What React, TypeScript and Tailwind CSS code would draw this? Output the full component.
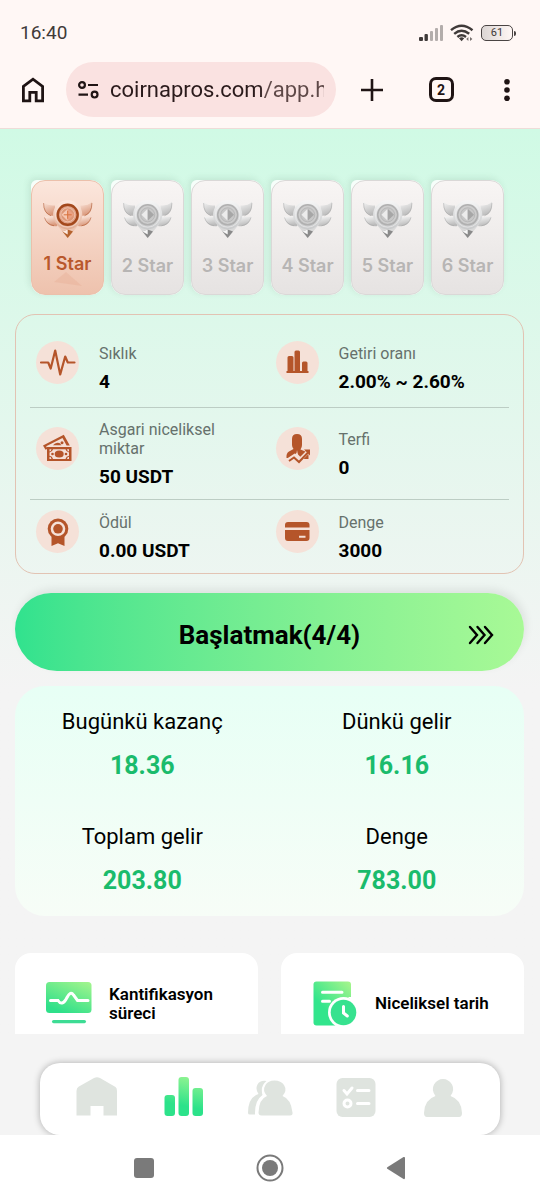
import React, { useState } from 'react';

const LEVELS = [1, 2, 3, 4, 5, 6];

const EARNINGS = [
  { label: 'Bugünkü kazanç', value: '18.36' },
  { label: 'Dünkü gelir', value: '16.16' },
  { label: 'Toplam gelir', value: '203.80' },
  { label: 'Denge', value: '783.00' },
];

const StatusBar = () => (
  <div className="flex h-[62px] items-center justify-between pt-1 pr-6 pl-5">
    <span className="text-[19px] leading-6 text-[#3f3a39]">16:40</span>
    <div className="flex items-center gap-[7px]">
      <svg width="24" height="16" viewBox="0 0 24 16" aria-hidden="true">
        <rect x="0" y="12" width="4" height="4" rx="1" fill="#3f3a39" />
        <rect x="5.5" y="9" width="3.4" height="7" rx="1" fill="#3f3a39" />
        <rect x="11" y="6" width="3" height="10" rx="1" fill="#b3adab" />
        <rect x="16" y="3" width="3" height="13" rx="1" fill="#b3adab" />
        <rect x="21" y="0" width="3" height="16" rx="1" fill="#b3adab" />
      </svg>
      <svg width="24" height="18" viewBox="0 0 24 18" fill="none" stroke="#3f3a39" strokeWidth="2.4" aria-hidden="true">
        <path d="M1 6.2Q11.5-2.8 22.5 6.2" />
        <path d="M4.2 9.8Q11.5 3.6 19.2 9.8" />
        <path d="M7.4 13Q11.5 9.4 16 13" />
        <path d="M9 14.2Q11.6 12.4 14.2 14.2L11.6 17.2z" fill="#3f3a39" stroke="none" />
        <path d="M18.4 13v4l-2.2-2zM20 17v-4l2.4 2z" fill="#77706e" stroke="none" />
      </svg>
      <div className="flex items-center gap-px">
        <div className="flex h-4 w-8 items-center justify-center rounded-[5px] border border-[#4a4443] bg-linear-to-r from-[#dcd6d4] to-[#fff7f5] text-[11px] leading-[14px] text-[#3f3a39]">
          61
        </div>
        <div className="h-[5px] w-[2px] rounded-r-sm bg-[#4a4443]" />
      </div>
    </div>
  </div>
);

const BrowserBar = () => {
  const [url, setUrl] = useState('coirnapros.com/app.h');

  return (
    <div className="flex items-center pb-[11px] text-[#1f1414]">
      <button type="button" aria-label="Home" className="flex w-[66px] justify-center">
        <svg width="24" height="26" viewBox="0 0 24 26" fill="none" stroke="currentColor" strokeWidth="2.8">
          <path d="M2.4 9.4 12 2.2l9.6 7.2v14.4h-6.4v-8.4H8.8v8.4H2.4z" />
        </svg>
      </button>
      <div className="flex h-[55px] min-w-0 flex-1 items-center gap-[11px] rounded-full bg-[#fae2e1] px-3">
        <svg className="shrink-0" width="21" height="18" viewBox="0 0 21 18" fill="none" stroke="currentColor" strokeWidth="2.2">
          <circle cx="4" cy="4" r="2.9" />
          <path d="M10 4h10M0.5 13.6h9.5" />
          <circle cx="16.6" cy="13.6" r="2.9" />
        </svg>
        <input
          aria-label="Address"
          value={url}
          onChange={(e) => setUrl(e.target.value)}
          className="w-full min-w-0 bg-linear-to-r from-[#2a1a1b] from-70% to-[#5e4847] to-72% bg-clip-text text-[22px] leading-7 text-transparent caret-black outline-none"
        />
      </div>
      <button type="button" aria-label="New tab" className="flex w-[72px] justify-center">
        <svg width="22" height="22" viewBox="0 0 22 22" stroke="currentColor" strokeWidth="2.6">
          <path d="M11 0v22M0 11h22" />
        </svg>
      </button>
      <div className="flex w-[66px] justify-center">
        <button
          type="button"
          aria-label="Tabs"
          className="flex size-[25px] items-center justify-center rounded-[7px] border-3 border-[#1f1414] text-sm leading-4 font-bold"
        >
          2
        </button>
      </div>
      <button type="button" aria-label="Menu" className="flex w-[66px] justify-center">
        <svg width="6" height="22" viewBox="0 0 6 22" fill="currentColor">
          <circle cx="3" cy="2.8" r="2.8" />
          <circle cx="3" cy="11" r="2.8" />
          <circle cx="3" cy="19.2" r="2.8" />
        </svg>
      </button>
    </div>
  );
};

const Badge = ({ id, active }: { id: string; active: boolean }) => {
  const light = active ? '#fdeae1' : '#f6f6f6';
  const mid = active ? '#d9977a' : '#bababa';
  const dark = active ? '#a3481c' : '#a3a3a3';
  const deep = active ? '#b5632f' : '#8a8a8a';

  return (
    <svg width="50" height="38" viewBox="0 0 50 38" aria-hidden="true">
      <defs>
        <linearGradient id={`${id}-wing`} x1="0" y1="0" x2="0.3" y2="1">
          <stop offset="0" stopColor={light} />
          <stop offset="1" stopColor={mid} />
        </linearGradient>
        <linearGradient id={`${id}-disc`} x1="0" y1="0" x2="0" y2="1">
          <stop offset="0" stopColor={light} />
          <stop offset="0.5" stopColor={active ? '#f1cdbc' : '#dedfe0'} />
          <stop offset="1" stopColor={active ? '#e0ab92' : '#c8c9ca'} />
        </linearGradient>
      </defs>
      {/* wings, two feathers a side */}
      <g fill={`url(#${id}-wing)`}>
        <path d="M0.5 1.5C3 4.500 6 5.500 12 5.500V15.800C4 16.500-0.500 11 0.500 1.500z" />
        <path d="M1.200 16.800H12L14.500 26C7 27 2.500 23.500 1.200 16.800z" />
        <path d="M49 1.500C46.500 4.500 43.500 5.500 37.500 5.500V15.800C45.500 16.500 50 11 49 1.500z" />
        <path d="M48.300 16.800H37.500L35 26C42.500 27 47 23.500 48.300 16.800z" />
      </g>
      <path
        d="M0.600 3Q0.500 13 8 15.800M1.500 17.500Q3.500 24.500 11 25.800M48.900 3Q49 13 41.500 15.800M48 17.500Q46 24.500 38.500 25.800"
        stroke={dark}
        strokeOpacity="0.55"
        strokeWidth="0.9"
        fill="none"
      />
      <path d="M14 25 24.700 38 35.500 25z" fill={active ? '#edc4b0' : '#d9d9d9'} />
      <path d="M19.500 31.600 24.700 38 30 31.600 24.700 29.500z" fill={deep} />
      <path d="M19.500 31.600 24.700 29.500V34.500z" fill={light} />
      <circle cx="24.700" cy="14.800" r="14.600" fill={`url(#${id}-disc)`} />
      <circle cx="24.700" cy="14.800" r="12.400" fill="none" stroke={light} strokeOpacity="0.5" />
      <circle cx="24.700" cy="14.800" r="10" fill={active ? '#e0a288' : '#cdcdcd'} stroke={active ? dark : '#b0b0b0'} strokeWidth={active ? 2.4 : 1.6} />
      <circle cx="24.700" cy="14.800" r="7" fill={active ? '#dd9878' : '#c8c8c8'} stroke={active ? '#efc0aa' : '#b8b8b8'} />
      <path d="M24.700 8.800 18.500 14.800l6.200 6z" fill={active ? '#f6c9b4' : '#ececec'} />
      <path d="M24.700 8.800 31 14.800l-6.300 6z" fill={active ? '#eba184' : '#a6a6a6'} />
      {active && <path d="M24.700 10.800v8M20.700 14.800h8" stroke="#d9743f" />}
    </svg>
  );
};

const LevelCard = ({ level, active, onSelect }: { level: number; active: boolean; onSelect: () => void }) => (
  <button
    type="button"
    onClick={onSelect}
    aria-pressed={active}
    className="h-[115px] flex-1 rounded-[14px] rounded-tl-md bg-white/80 shadow-[-2px_-2px_6px_rgba(80,120,100,0.14)]"
  >
    <div
      className={`relative flex h-full flex-col items-center rounded-[14px] border pt-[19px] ${
        active
          ? 'gap-4 border-[#ebc0ab] bg-linear-to-b from-[#fbe6dc] to-[#eec2ad] text-[#b9582c]'
          : 'gap-[18px] border-[#dad8d7] bg-linear-to-b from-[#f8f5f4] to-[#e6e3e2] text-[#b7b5b4]'
      }`}
    >
      {active && (
        <svg className="absolute bottom-2 left-[22px]" width="28" height="14" viewBox="0 0 28 14" aria-hidden="true">
          <path d="M12 0 28 14 0 10z" fill="#e3a78c" fillOpacity="0.3" />
        </svg>
      )}
      <Badge id={`badge-${level}`} active={active} />
      <span className="relative font-[Inter] text-lg leading-5 font-semibold whitespace-nowrap">{level} Star</span>
    </div>
  </button>
);

const PulseIcon = () => (
  <svg width="43" height="43" viewBox="0 0 43 43" fill="none" stroke="#b5552a" strokeWidth="2.2" strokeLinecap="round" strokeLinejoin="round">
    <path d="M5 21.500h7.200l2.500 6 4.500-18 5 24 5-18 2.600 6H38.500" />
  </svg>
);

const BarsIcon = () => (
  <svg width="43" height="43" viewBox="0 0 43 43" fill="#b5552a">
    <path d="M11.500 30V16.500q0-1.500 1.500-1.500h3q1.500 0 1.500 1.500V30h1V11q0-1.500 1.500-1.500h2.500q1.500 0 1.500 1.500V30h2v-8q0-1.500 1.500-1.500h2.500q1.500 0 1.500 1.500v8h1v2h-22v-2z" />
  </svg>
);

const CashIcon = () => (
  <svg width="43" height="43" viewBox="0 0 43 43" fill="#b5552a">
    <path d="M7 18.500 27.800 7.800l6 10.700h-3.200L26.500 11 10.200 19.300l1.300 2.500-2 1z" />
    <path d="M17 18.200q2.500-3.500 6.500-2.200l2 2.200z" />
    <circle cx="26" cy="15.800" r="1.500" />
    <path fillRule="evenodd" d="M11 20h24.500v14H11zM13.500 22.300v2.200q1.500 0 2-2.200zM31 22.300q.5 2.200 2 2.200v-2.200zM13.500 29.700v2.200h2q-.5-2.200-2-2.200zM31 31.900h2v-2.200q-1.500 0-2 2.200zM17 22.300q-.5 2.700-3.500 3.200v3.200q3 .5 3.500 3.200h12.500q.5-2.700 3.500-3.200v-3.200q-3-.5-3.500-3.200z" />
    <ellipse cx="23.200" cy="27" rx="4.500" ry="3.600" />
    <circle cx="16.500" cy="27" r="1.300" />
    <circle cx="30" cy="27" r="1.300" />
  </svg>
);

const PromoteIcon = () => (
  <svg width="43" height="43" viewBox="0 0 43 43" fill="#b5552a">
    <path d="M16 12q0-5 5-5t5 5v6q0 2.500-1.500 4.500l6 2.500-6 5-4-4-6 5H10.500q-.5-5 2.500-6.500l4.500-2.500q-1.500-2-1.500-4z" />
    <path d="m21 23 1.200 6-2.200 1z" fill="#f5e1d8" />
    <path d="m12.500 33 6-4 5 4.500 8-8" fill="none" stroke="#f5e1d8" strokeWidth="4" />
    <path d="m13 34 5-3.500 5 4.500 9-9.500" fill="none" stroke="#b5552a" strokeWidth="2" />
    <path d="M28 22.500h6v6zM27.500 32l5-5V32z" />
  </svg>
);

const MedalIcon = () => (
  <svg width="43" height="43" viewBox="0 0 43 43" fill="#b5552a">
    <path d="M15.500 24h13v12l-6.500-2.800-6.500 2.800z" />
    <circle cx="22" cy="18.800" r="10.300" />
    <circle cx="22" cy="18.800" r="7.300" fill="#f5e1d8" />
    <circle cx="22" cy="18.800" r="4.800" />
  </svg>
);

const CardIcon = () => (
  <svg width="43" height="43" viewBox="0 0 43 43" fill="#b5552a">
    <path d="M9 17.500V15q0-3 3-3h18.500q3 0 3 3v2.500z" />
    <path fillRule="evenodd" d="M9 20h24.500v8q0 3-3 3H12q-3 0-3-3zM23 25.800v2h6.500v-2z" />
  </svg>
);

const DETAILS = [
  [
    { label: 'Sıklık', value: '4', icon: <PulseIcon /> },
    { label: 'Getiri oranı', value: '2.00% ~ 2.60%', icon: <BarsIcon /> },
  ],
  [
    { label: 'Asgari niceliksel miktar', value: '50 USDT', icon: <CashIcon /> },
    { label: 'Terfi', value: '0', icon: <PromoteIcon /> },
  ],
  [
    { label: 'Ödül', value: '0.00 USDT', icon: <MedalIcon /> },
    { label: 'Denge', value: '3000', icon: <CardIcon /> },
  ],
];

const MonitorIcon = () => (
  <svg className="shrink-0" width="46" height="46" viewBox="0 0 46 46" aria-hidden="true">
    <defs>
      <linearGradient id="monitor" x1="1" y1="0" x2="0.4" y2="1">
        <stop offset="0" stopColor="#a5f58d" />
        <stop offset="1" stopColor="#2fe08a" />
      </linearGradient>
    </defs>
    <rect x="0" y="1" width="45.500" height="31" rx="3.500" fill="url(#monitor)" />
    <path d="M4.500 19.500h7.500q2 3 4 2.500 2.500-.5 5-5.500 3.500-7 6.500-2.500l4 5.500h10.500" fill="none" stroke="#fff" strokeWidth="3" strokeLinecap="round" />
    <rect x="6" y="39" width="34" height="3.200" rx="1.600" fill="#3ddc94" />
  </svg>
);

const HistoryIcon = () => (
  <svg className="shrink-0" width="46" height="46" viewBox="0 0 46 46" aria-hidden="true">
    <defs>
      <linearGradient id="history" x1="1" y1="0" x2="0.400" y2="0.700">
        <stop offset="0" stopColor="#a9f58b" />
        <stop offset="1" stopColor="#32e58c" />
      </linearGradient>
    </defs>
    <rect x="1.500" y="0.500" width="37.500" height="44" rx="3" fill="url(#history)" />
    <path d="M10.500 11.300h19.500M10.500 20.300h7" stroke="#fff" strokeWidth="3" strokeLinecap="round" />
    <path d="M36 16h6v6z" fill="#fff" />
    <circle cx="31.500" cy="31.500" r="15.500" fill="#fff" />
    <circle cx="31.500" cy="31.500" r="12.800" fill="#37e28f" />
    <path d="M31.500 25.500v6.500l3.800 3" fill="none" stroke="#fff" strokeWidth="3" strokeLinecap="round" />
  </svg>
);

const TABS = [
  {
    name: 'Home',
    icon: <path d="M1.500 16q0-3 2-4.200L19 3q3-1.500 6 0l15.500 9q1.500 1 1.500 4v24.500H28.500V31h-13v9.500h-14z" />,
  },
  {
    name: 'Quantify',
    icon: (
      <g fill="url(#tab)">
        <rect x="2.500" y="20" width="10.500" height="21" rx="3" />
        <rect x="16.500" y="2" width="10.500" height="39" rx="3" />
        <rect x="30.500" y="13" width="10.500" height="28" rx="3" />
      </g>
    ),
  },
  {
    name: 'Team',
    icon: (
      <>
        <path d="M18.500 6q-6.500-1-9 3.500t1 9.500Q0 22.500 0 38q0 1.500 2 1.500h5q-.5-14 7.500-19.500-2.500-9 4-14z" />
        <path d="M19 21Q11 24 10.500 37.500q0 3 3 3h28.500q3 0 2.500-3Q43 24 34.500 21q5-5.500 1.500-11-3-4.500-9.500-4.500T17.500 10q-3.500 5.500 1.500 11z" />
      </>
    ),
  },
  {
    name: 'Tasks',
    icon: (
      <>
        <rect x="2.500" y="3" width="39" height="39" rx="6" />
        <g fill="none" stroke="#fff" strokeWidth="3" strokeLinecap="round">
          <path d="m10 15.500 3 3.500 5-6M23.500 15.500H35M23.500 28.500H35" />
          <circle cx="13.500" cy="28.500" r="3.500" />
        </g>
      </>
    ),
  },
  {
    name: 'Profile',
    icon: (
      <path d="M14.500 21q-4.500-6-1.500-11.500Q16.500 4 22 4t9 5.500q3 5.500-1.500 11.500Q40.500 24.500 41 38q0 4-3 4H6q-3 0-3-4Q3.500 24.500 14.500 21z" />
    ),
  },
];

const TabBar = ({ current, onChange }: { current: string; onChange: (name: string) => void }) => (
  <div className="overflow-hidden bg-[#f4f4f4] px-10 pt-[29px]">
    <svg width="0" height="0" className="absolute" aria-hidden="true">
      <defs>
        <linearGradient id="tab" gradientUnits="userSpaceOnUse" x1="24" y1="2" x2="18" y2="30">
          <stop offset="0" stopColor="#8df391" />
          <stop offset="1" stopColor="#2ce28a" />
        </linearGradient>
      </defs>
    </svg>
    <nav className="flex h-[72px] items-start rounded-[20px] bg-white px-[14px] pt-3 shadow-[0_0_7px_rgba(0,0,0,0.3)]">
      {TABS.map((tab) => (
        <button
          key={tab.name}
          type="button"
          aria-label={tab.name}
          aria-current={tab.name === current ? 'page' : undefined}
          onClick={() => onChange(tab.name)}
          className="flex flex-1 justify-center"
        >
          <svg width="44" height="44" viewBox="0 0 44 44" fill="#dfe4df" className="overflow-visible">
            {tab.icon}
          </svg>
        </button>
      ))}
    </nav>
  </div>
);

const SystemNav = () => (
  <div className="flex h-[65px] items-center justify-center bg-white text-[#7a7a7a]">
    <button type="button" aria-label="Recents" className="flex w-[126px] justify-center">
      <span className="size-5 rounded-[3px] bg-current" />
    </button>
    <button type="button" aria-label="System home" className="flex w-[126px] justify-center">
      <svg width="28" height="28" viewBox="0 0 28 28">
        <circle cx="14" cy="14" r="12.500" fill="none" stroke="currentColor" strokeWidth="2" />
        <circle cx="14" cy="14" r="8" fill="currentColor" />
      </svg>
    </button>
    <button type="button" aria-label="Back" className="flex w-[126px] justify-center">
      <svg width="20" height="24" viewBox="0 0 20 24" fill="currentColor">
        <path d="M1.300 11.200 17.500 1q1.500-.5 1.500 1v20q0 1.500-1.500 1L1.300 12.800q-1-.8 0-1.600z" />
      </svg>
    </button>
  </div>
);

const App: React.FC = () => {
  const [level, setLevel] = useState(1);
  const [tab, setTab] = useState('Quantify');

  return (
    <div className="bg-[#f4f4f4] font-[Roboto,sans-serif] text-black">
      <header className="border-b border-[#efdcd8] bg-[#fff7f5]">
        <StatusBar />
        <BrowserBar />
      </header>

      <main className="bg-linear-to-b from-[#d0fae5] to-[#f4f4f4] to-[560px] pt-[51px] pr-4 pl-[15px]">
        <div className="flex gap-[7px] pr-5 pl-4">
          {LEVELS.map((n) => (
            <LevelCard key={n} level={n} active={n === level} onSelect={() => setLevel(n)} />
          ))}
        </div>

        <section className="mt-[19px] rounded-[20px] border border-[#e2c3b3] px-[14px] pt-4">
          {DETAILS.map((row) => (
            <div
              key={row[0].label}
              className="grid grid-cols-2 border-b border-[#bccdc4] py-3 first:pb-[15px] last:border-b-0"
            >
              {row.map((item) => (
                <div key={item.label} className="flex items-center gap-5 pr-8 pl-[6px]">
                  <div className="-mt-[2px] mb-2 size-[43px] shrink-0 rounded-full bg-[#f5e1d8]">{item.icon}</div>
                  <div>
                    <p className="text-base leading-[19px] text-[#66716c]">{item.label}</p>
                    <p className="mt-2 text-[19px] leading-[21px] font-bold whitespace-nowrap">{item.value}</p>
                  </div>
                </div>
              ))}
            </div>
          ))}
        </section>

        <button
          type="button"
          className="mt-[19px] grid h-[78px] w-full grid-cols-[1fr_auto_1fr] items-center rounded-t-[36px] rounded-b-[42px] bg-linear-to-r from-[#30e28e] to-[#a8f996] px-[30px] pt-[6px] shadow-[2px_-4px_8px_rgba(0,0,0,0.08)]"
        >
          <span className="col-start-2 text-[26px] leading-8 font-bold">Başlatmak(4/4)</span>
          <svg className="justify-self-end" width="26" height="20" viewBox="0 0 26 20" fill="none" stroke="currentColor" strokeWidth="2.400" strokeLinecap="round">
            <path d="m2 2 7 8-7 8M9.500 2l7 8-7 8M17 2l7 8-7 8" />
          </svg>
        </button>

        <section className="mt-[15px] grid grid-cols-2 rounded-[30px] bg-linear-to-b from-[#e7fff5] to-[#f7fdf7] text-center">
          {EARNINGS.map((item) => (
            <div key={item.label} className="pt-[23px] pb-5">
              <p className="text-[22px] leading-[26px]">{item.label}</p>
              <p className="mt-4 text-[25px] leading-[30px] font-bold text-[#1abb6c]">{item.value}</p>
            </div>
          ))}
        </section>

        <div className="mt-[37px] grid grid-cols-2 gap-[23px]">
          <a href="#process" className="flex h-[81px] items-center gap-[17px] rounded-t-2xl bg-white pt-5 pl-[31px]">
            <MonitorIcon />
            <span className="text-[17px] leading-[19px] font-semibold">Kantifikasyon süreci</span>
          </a>
          <a href="#history" className="flex h-[81px] items-center gap-[17px] rounded-t-2xl bg-white pt-5 pl-[31px]">
            <HistoryIcon />
            <span className="text-[17px] leading-[19px] font-semibold">Niceliksel tarih</span>
          </a>
        </div>
      </main>

      <TabBar current={tab} onChange={setTab} />
      <SystemNav />
    </div>
  );
};

export default App;
